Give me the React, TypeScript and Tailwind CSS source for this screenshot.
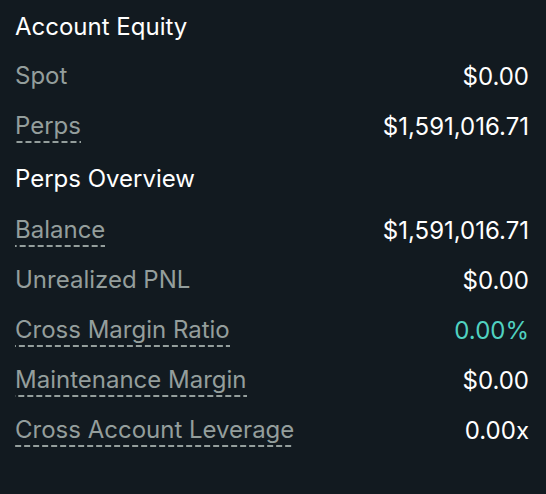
const rows = [
  { label: 'Spot', value: '$0.00', dashed: false },
  { label: 'Perps', value: '$1,591,016.71', dashed: true },
]

const overview = [
  { label: 'Balance', value: '$1,591,016.71', dashed: true },
  { label: 'Unrealized PNL', value: '$0.00', dashed: false },
  { label: 'Cross Margin Ratio', value: '0.00%', dashed: true, accent: true },
  { label: 'Maintenance Margin', value: '$0.00', dashed: true },
  { label: 'Cross Account Leverage', value: '0.00x', dashed: true },
]

function Row({ label, value, dashed, accent }: { label: string; value: string; dashed?: boolean; accent?: boolean }) {
  return (
    <div className="flex items-center justify-between h-[50px]">
      <span
        className={
          dashed
            ? 'text-[#949e9c] pb-[2px] bg-[linear-gradient(to_right,#949e9c_66%,transparent_0)] bg-[length:9px_2px] bg-repeat-x bg-bottom'
            : 'text-[#949e9c] pb-[2px]'
        }
      >
        {label}
      </span>
      <span className={accent ? 'text-[#50d2c1]' : 'text-white'}>{value}</span>
    </div>
  )
}

export default function App() {
  return (
    <div className="min-h-screen bg-[#121a20] font-['Inter',sans-serif] text-[24px] leading-[30px] pl-[15px] pr-[17px] pt-[2px]">
      <div className="h-[50px] flex items-center text-white">Account Equity</div>
      {rows.map(r => (
        <Row key={r.label} {...r} />
      ))}
      <div className="h-[54px] flex items-center text-white">Perps Overview</div>
      {overview.map(r => (
        <Row key={r.label} {...r} />
      ))}
    </div>
  )
}
